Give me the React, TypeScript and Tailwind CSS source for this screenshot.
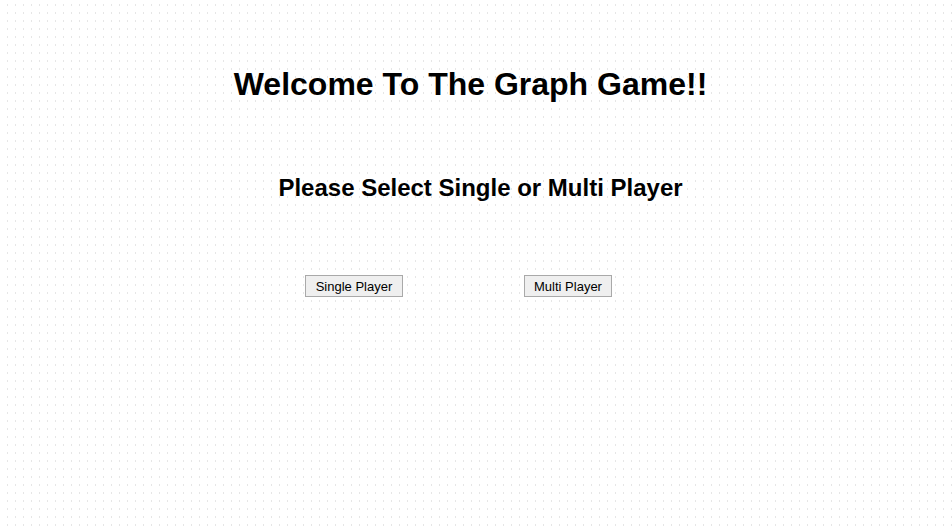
export default function App() {
  return (
    <div
      className="w-[952px] h-[531px] bg-white font-['Liberation_Sans',Arial,sans-serif] text-black bg-[linear-gradient(to_bottom,#fff_4px,transparent_4px,transparent_6px,#fff_6px),linear-gradient(to_right,transparent_7px,#e6e6e6_7px)] bg-[size:8px_8px]"
    >
      <div className="flex flex-col items-center pt-[66px]">
        <h1 className="text-[32px] leading-[37px] font-bold ml-[-11px]">Welcome To The Graph Game!!</h1>
        <h2 className="mt-[71px] text-[24px] leading-[28px] font-bold ml-[9px]">
          Please Select Single or Multi Player
        </h2>
        <div className="flex mt-[73px] w-full">
          <div className="w-[305px]" />
          <button className="h-[22px] w-[98px] border border-[#a9a9a9] bg-[#efefef] text-[13px] leading-none text-black">
            Single Player
          </button>
          <div className="w-[121px]" />
          <button className="h-[22px] w-[88px] border border-[#a9a9a9] bg-[#efefef] text-[13px] leading-none text-black">
            Multi Player
          </button>
        </div>
      </div>
    </div>
  )
}
